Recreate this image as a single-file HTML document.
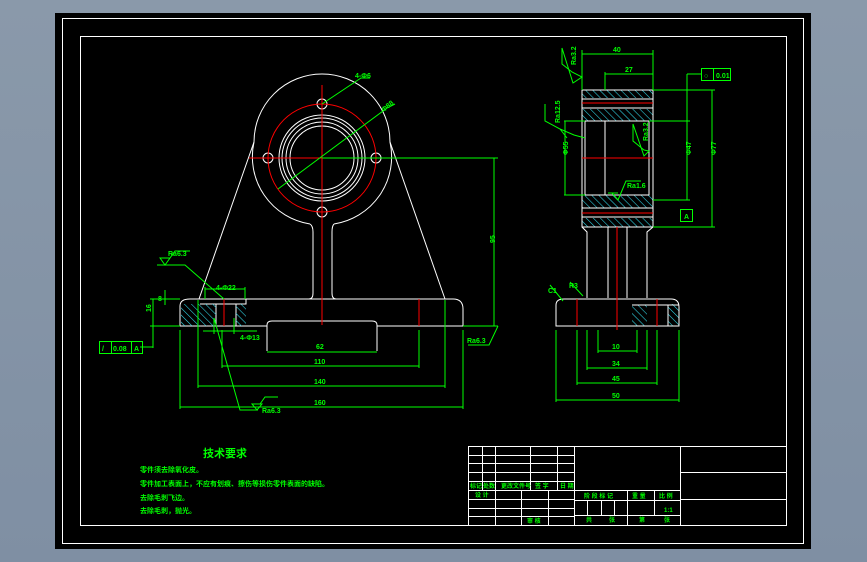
<!DOCTYPE html>
<html><head><meta charset="utf-8"><style>
html,body{margin:0;padding:0;width:867px;height:562px;overflow:hidden;background:linear-gradient(#8a99aa,#7f8fa3);}
svg{position:absolute;left:0;top:0}
text{font-family:"Liberation Sans","Noto Sans CJK SC",sans-serif;fill:#00ff00;font-weight:bold}
</style></head><body>
<svg width="867" height="562" viewBox="0 0 867 562">
<defs>
<pattern id="h" width="5" height="5" patternUnits="userSpaceOnUse" patternTransform="rotate(-45)">
<line x1="0" y1="0" x2="0" y2="5" stroke="#33ddee" stroke-width="1.1"/></pattern>
</defs>
<rect x="55" y="13" width="756" height="536" fill="#000"/>
<rect x="62.5" y="18.5" width="741" height="525" fill="none" stroke="#fff" stroke-width="1"/>
<rect x="80.5" y="36.5" width="706" height="489" fill="none" stroke="#fff" stroke-width="1"/>

<!-- FRONT VIEW -->
<g fill="none" stroke="#fff" stroke-width="1">
<path d="M254 142 A68 68 0 1 1 390 142"/>
<path d="M254 142 A68 68 0 0 0 310 224"/>
<path d="M390 142 A68 68 0 0 1 334 224"/>
<circle cx="322" cy="158" r="43"/><circle cx="322" cy="158" r="40"/><circle cx="322" cy="158" r="36"/><circle cx="322" cy="158" r="32"/>
<circle cx="268" cy="158" r="5"/><circle cx="376" cy="158" r="5"/><circle cx="322" cy="104" r="5"/><circle cx="322" cy="212" r="5"/>
<path d="M254 142 L199 299 M390 142 L445 299"/>
<path d="M310 224 Q313 226 313 232 L313 293 Q313 299 309 299 M334 224 Q332 226 332 232 L332 293 Q332 299 336 299"/>
<path d="M180 326 L180 306 Q180 299 190 299 L453 299 Q463 299 463 309 L463 326 M180 326 L267 326 M377 326 L463 326"/>
<path d="M267 351 L267 325 Q267 321 272 321 L372 321 Q377 321 377 325 L377 351"/>
<path d="M200 304 L246 304 L246 299 M216 304 L216 326 M236 304 L236 326"/>
</g>
<rect x="181" y="304" width="35" height="22" fill="url(#h)"/>
<rect x="236" y="304" width="10" height="22" fill="url(#h)"/>
<g stroke="#ff0000" stroke-width="1" fill="none">
<circle cx="322" cy="158" r="54"/>
<path d="M322 85 L322 325 M249 158 L322 158 M224 299 L224 326 M419 299 L419 326"/>
</g>
<g stroke="#00ff00" stroke-width="1" fill="none">
<path d="M322 158 L498 158 M494 158 L494 326 M463 326 L498 326 M498 326 L489 345 L468 345"/>
<path d="M278 189 L387 108 L395 104"/>
<path d="M322 104 L361 78 L370 78"/>
<path d="M267 352 L377 352 M222 330 L222 368 M419 330 L419 368 M222 366 L419 366"/>
<path d="M198 300 L198 388 M445 300 L445 388 M198 386 L445 386"/>
<path d="M180 330 L180 409 M463 330 L463 409 M180 407 L463 407"/>
<path d="M205 299 L205 287 M245 299 L245 287 M205 289 L245 289"/>
<path d="M203 331 L257 331 M214 318 L214 334 M234 318 L234 334"/>
<path d="M157 265 L185 265 L224 299 M160 258 L165 265 L170 258 Z M170 258 L175 251 L190 251"/>
<path d="M214 318 L240 410 L258 410 M252 404 L257 410 L262 404 Z M260 404 L265 397 L278 397"/>
<path d="M150 299 L180 299 M150 326 L180 326 M153 299 L153 348 M140 347 L153 347 M165 290 L165 305"/>
<rect x="99.5" y="341.5" width="43" height="12"/>
<path d="M111.5 341.5 V353.5 M131.5 341.5 V353.5"/>
</g>
<g font-size="7">
<text x="355" y="78">4-Φ6</text>
<text x="380" y="110" transform="rotate(-40 385 106)">Φ88</text>
<text x="216" y="290">4-Φ22</text>
<text x="240" y="340">4-Φ13</text>
<text x="316" y="349">62</text>
<text x="314" y="364">110</text>
<text x="314" y="384">140</text>
<text x="314" y="405">160</text>
<text x="492" y="246" transform="rotate(-90 492 243)">95</text>
<text x="467" y="343">Ra6.3</text>
<text x="168" y="256">Ra6.3</text>
<text x="262" y="413">Ra6.3</text>
<text x="158" y="301">8</text>
<text x="148" y="315" transform="rotate(-90 148 312)">16</text>
<text x="102" y="351">/</text><text x="113" y="351">0.08</text><text x="134" y="351">A</text>
</g>

<!-- SIDE VIEW -->
<rect x="582" y="90" width="71" height="8" fill="url(#h)"/>
<rect x="582" y="109" width="71" height="12" fill="url(#h)"/>
<rect x="582" y="195" width="71" height="13" fill="url(#h)"/>
<rect x="582" y="218" width="71" height="9" fill="url(#h)"/>
<rect x="632" y="305" width="15" height="21" fill="url(#h)"/>
<rect x="668" y="304" width="11" height="22" fill="url(#h)"/>
<g fill="none" stroke="#fff" stroke-width="1">
<path d="M582 90 H653 V227 H582 Z M582 99 H653 M582 108 H653 M582 208 H653 M582 217 H653"/>
<path d="M585 121 H649 V195 H585 Z M605 121 V195"/>
<path d="M582 227 L587 232 L587 298 M653 227 L647 232 L647 298 M608 227 L608 298 M627 227 L627 298"/>
<path d="M556 326 L556 305 Q556 299 564 299 L671 299 Q679 299 679 307 L679 326 Z M632 305 L679 305 M668 305 V326"/>
</g>
<g stroke="#ff0000" stroke-width="1"><path d="M582 103 H653 M582 158 H653 M582 213 H653 M617 227 V330 M577 299 V326 M657 299 V326"/></g>
<g stroke="#00ff00" stroke-width="1" fill="none">
<path d="M582 50 V90 M653 50 V90 M582 54 H653 M605 72 V90 M605 74 H653"/>
<path d="M653 90 H715 M653 227 H715 M712 90 V227 M649 121 H690 M653 200 H690 M687 74 V200 M687 74 H701"/>
<rect x="701.5" y="68.5" width="29" height="12"/><path d="M713.5 68.5 V80.5"/>
<rect x="680.5" y="209.5" width="12" height="12"/>
<path d="M564 121 H585 M564 195 H585 M565 121 V195"/>
<path d="M556 330 V402 M679 330 V402 M556 400 H679 M577 330 V385 M657 330 V385 M577 383 H657 M587 330 V370 M647 330 V370 M587 368 H647 M598 330 V353 M637 330 V353 M598 351 H637"/>
<path d="M562 48 L562 64 L572 72 L582 77 L573 83 Z M545 104 L545 121 L560 129 L567 138 M560 129 L574 135 L585 138"/>
<path d="M633 124 L633 141 L644 150 L649 151 L644 156 Z M612 193 L618 200 L626 181 L641 181 M608 193 L618 193"/>
<path d="M550 285 L563 301 M570 282 L583 296"/>
</g>
<g font-size="7">
<text x="613" y="52">40</text>
<text x="625" y="72">27</text>
<text x="704" y="78">○</text><text x="716" y="78">0.01</text>
<text x="684" y="219">A</text>
<text x="714" y="163" transform="rotate(-90 711 158)">Φ77</text>
<text x="689" y="163" transform="rotate(-90 686 158)">Φ47</text>
<text x="566" y="163" transform="rotate(-90 563 158)">Φ55</text>
<text x="558" y="63" transform="rotate(-90 568 55)">Ra3.2</text>
<text x="542" y="123" transform="rotate(-90 551 114)">Ra12.5</text>
<text x="629" y="138" transform="rotate(-90 640 130)">Ra3.2</text>
<text x="627" y="188">Ra1.6</text>
<text x="612" y="349">10</text>
<text x="612" y="366">34</text>
<text x="612" y="381">45</text>
<text x="612" y="398">50</text>
<text x="548" y="293">C1</text><text x="569" y="288">R3</text>
</g>

<!-- TECH TEXT -->
<text x="203" y="457" font-size="11">技术要求</text>
<g font-size="7">
<text x="140" y="472">零件须去除氧化皮。</text>
<text x="140" y="486">零件加工表面上，不应有划痕、擦伤等损伤零件表面的缺陷。</text>
<text x="140" y="500">去除毛刺飞边。</text>
<text x="140" y="513">去除毛刺，抛光。</text>
</g>

<!-- TITLE BLOCK -->
<g stroke="#fff" stroke-width="1" fill="none">
<rect x="468.5" y="446.5" width="318" height="79"/>
<path d="M482.5 446.5 V490 M495.5 446.5 V525.5 M530.5 446.5 V490 M557.5 446.5 V490 M574.5 446.5 V525.5 M680.5 446.5 V525.5"/>
<path d="M468.5 455.5 H574.5 M468.5 463.5 H574.5 M468.5 472.5 H574.5 M468.5 481.5 H574.5 M468.5 490.5 H680.5 M468.5 499.5 H574.5 M468.5 508.5 H574.5 M468.5 516.5 H574.5"/>
<path d="M521.5 490.5 V525.5 M548.5 490.5 V525.5"/>
<path d="M574.5 500.5 H680.5 M574.5 515.5 H680.5 M627.5 490.5 V525.5 M654.5 490.5 V515.5 M587.5 500.5 V515.5 M601.5 500.5 V515.5 M614.5 500.5 V515.5"/>
<path d="M680.5 472.5 H786.5 M680.5 499.5 H786.5"/>
</g>
<g font-size="6">
<text x="470" y="488">标记</text><text x="483" y="488">处数</text><text x="501" y="488">更改文件号</text><text x="535" y="488">签 字</text><text x="560" y="488">日 期</text>
<text x="475" y="497">设 计</text><text x="527" y="523">审 核</text>
<text x="584" y="498">阶 段 标 记</text><text x="632" y="498">重 量</text><text x="659" y="498">比 例</text>
<text x="664" y="512">1:1</text>
<text x="586" y="522">共</text><text x="609" y="522">张</text><text x="639" y="522">第</text><text x="664" y="522">张</text>
</g>
</svg>
</body></html>
